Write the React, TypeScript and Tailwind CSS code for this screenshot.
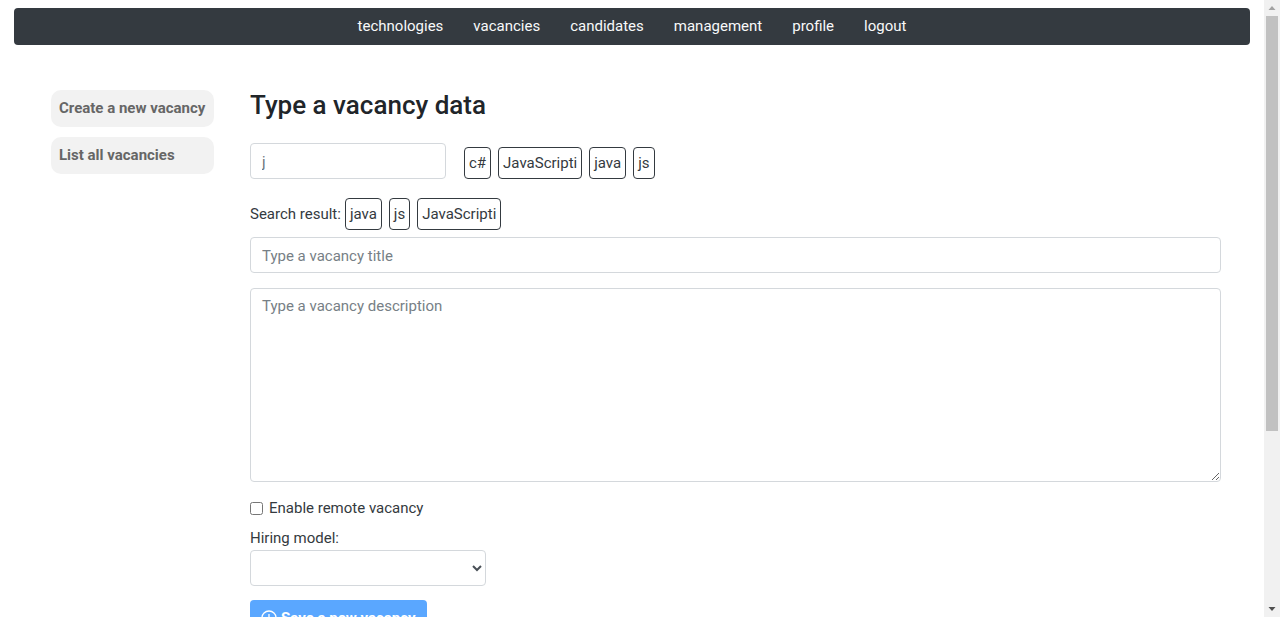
import { useState } from "react";

const navLinks = ["technologies", "vacancies", "candidates", "management", "profile", "logout"];
const sideLinks = ["Create a new vacancy", "List all vacancies"];
const selected = ["c#", "JavaScripti", "java", "js"];
const results = ["java", "js", "JavaScripti"];

const field = "block rounded border border-[#d4d8dc] bg-white px-[11px] placeholder:text-[#777f86]";

function Chip({ label }: { label: string }) {
  return (
    <button type="button" className="h-8 shrink-0 rounded border border-[#343a40] px-1 text-[#343a40]">
      {label}
    </button>
  );
}

function ScrollRail() {
  return (
    <div aria-hidden="true" className="flex w-4 shrink-0 flex-col bg-[#f1f1f1]">
      <svg className="h-4 w-4" viewBox="0 0 16 16">
        <path d="M4.500 10 8 6l3.500 4z" fill="#a3a3a3" />
      </svg>
      <div className="mx-0.5 grow-71 basis-0 bg-[#c1c1c1]" />
      <div className="grow-29 basis-0" />
      <svg className="h-4 w-4" viewBox="0 0 16 16">
        <path d="M4.500 6 8 10l3.500-4z" fill="#505050" />
      </svg>
    </div>
  );
}

export default function App() {
  const [query, setQuery] = useState("j");

  return (
    <div className="flex h-screen overflow-hidden bg-white font-[Roboto,sans-serif] text-[15px] leading-6 text-[#212529]">
      <div className="min-w-0 flex-1 overflow-hidden px-3.5 pt-2">
        <nav className="flex justify-center gap-[30px] rounded bg-[#343a40] pt-1.5 pb-[7px] text-[#f8f9fa]">
          {navLinks.map((name) => (
            <a key={name} href={"#" + name}>
              {name}
            </a>
          ))}
        </nav>

        <div className="mt-[45px] flex gap-9 pr-[29px] pl-[37px]">
          <aside className="flex w-[163px] shrink-0 flex-col gap-2.5">
            {sideLinks.map((name) => (
              <a
                key={name}
                href="#vacancies"
                className="rounded-[10px] bg-[#f2f2f2] px-2 pt-1.5 pb-[7px] font-bold whitespace-nowrap text-[#666666]"
              >
                {name}
              </a>
            ))}
          </aside>

          <form className="min-w-0 flex-1">
            <h1 className="text-[26px] leading-[30px] font-medium">Type a vacancy data</h1>

            <div className="mt-[23px] flex items-end gap-[18px]">
              <input
                aria-label="Search technologies"
                value={query}
                onChange={(e) => setQuery(e.target.value)}
                className={`${field} h-9 w-[196px] pt-0.5 text-[#6c757d]`}
              />
              <div className="flex gap-[7px]">
                {selected.map((name) => (
                  <Chip key={name} label={name} />
                ))}
              </div>
            </div>

            <div className="mt-[19px] flex items-center gap-1">
              <span className="text-[#343a40]">Search result:</span>
              <div className="flex gap-[7px]">
                {results.map((name) => (
                  <Chip key={name} label={name} />
                ))}
              </div>
            </div>

            <input
              aria-label="Vacancy title"
              placeholder="Type a vacancy title"
              className={`${field} mt-[7px] h-9 w-full pt-0.5 text-[#495057]`}
            />
            <textarea
              aria-label="Vacancy description"
              placeholder="Type a vacancy description"
              className={`${field} mt-[15px] h-[194px] w-full resize py-[5px] text-[#495057]`}
            />

            <div className="mt-3.5 flex items-center gap-1.5">
              <input id="remote" type="checkbox" className="h-[13px] w-[13px]" />
              <label htmlFor="remote" className="text-[#343a40]">
                Enable remote vacancy
              </label>
            </div>

            <label htmlFor="hiring" className="mt-1.5 block text-[#343a40]">
              Hiring model:
            </label>
            <select
              id="hiring"
              defaultValue=""
              className="block h-9 w-[236px] rounded border border-[#d4d8dc] bg-white text-[#495057]"
            >
              <option value=""></option>
            </select>

            <button
              type="button"
              className="mt-3.5 flex h-9 items-center gap-1 rounded bg-[#5aa7ff] px-[11px] font-bold whitespace-nowrap text-white"
            >
              <svg className="h-4 w-4" viewBox="0 0 16 16" fill="none" stroke="currentColor" strokeWidth="1.300" aria-hidden="true">
                <circle cx="8" cy="8" r="7" />
                <path d="M8 4v8M4 8h8" />
              </svg>
              Save a new vacancy
            </button>
          </form>
        </div>
      </div>
      <ScrollRail />
    </div>
  );
}
